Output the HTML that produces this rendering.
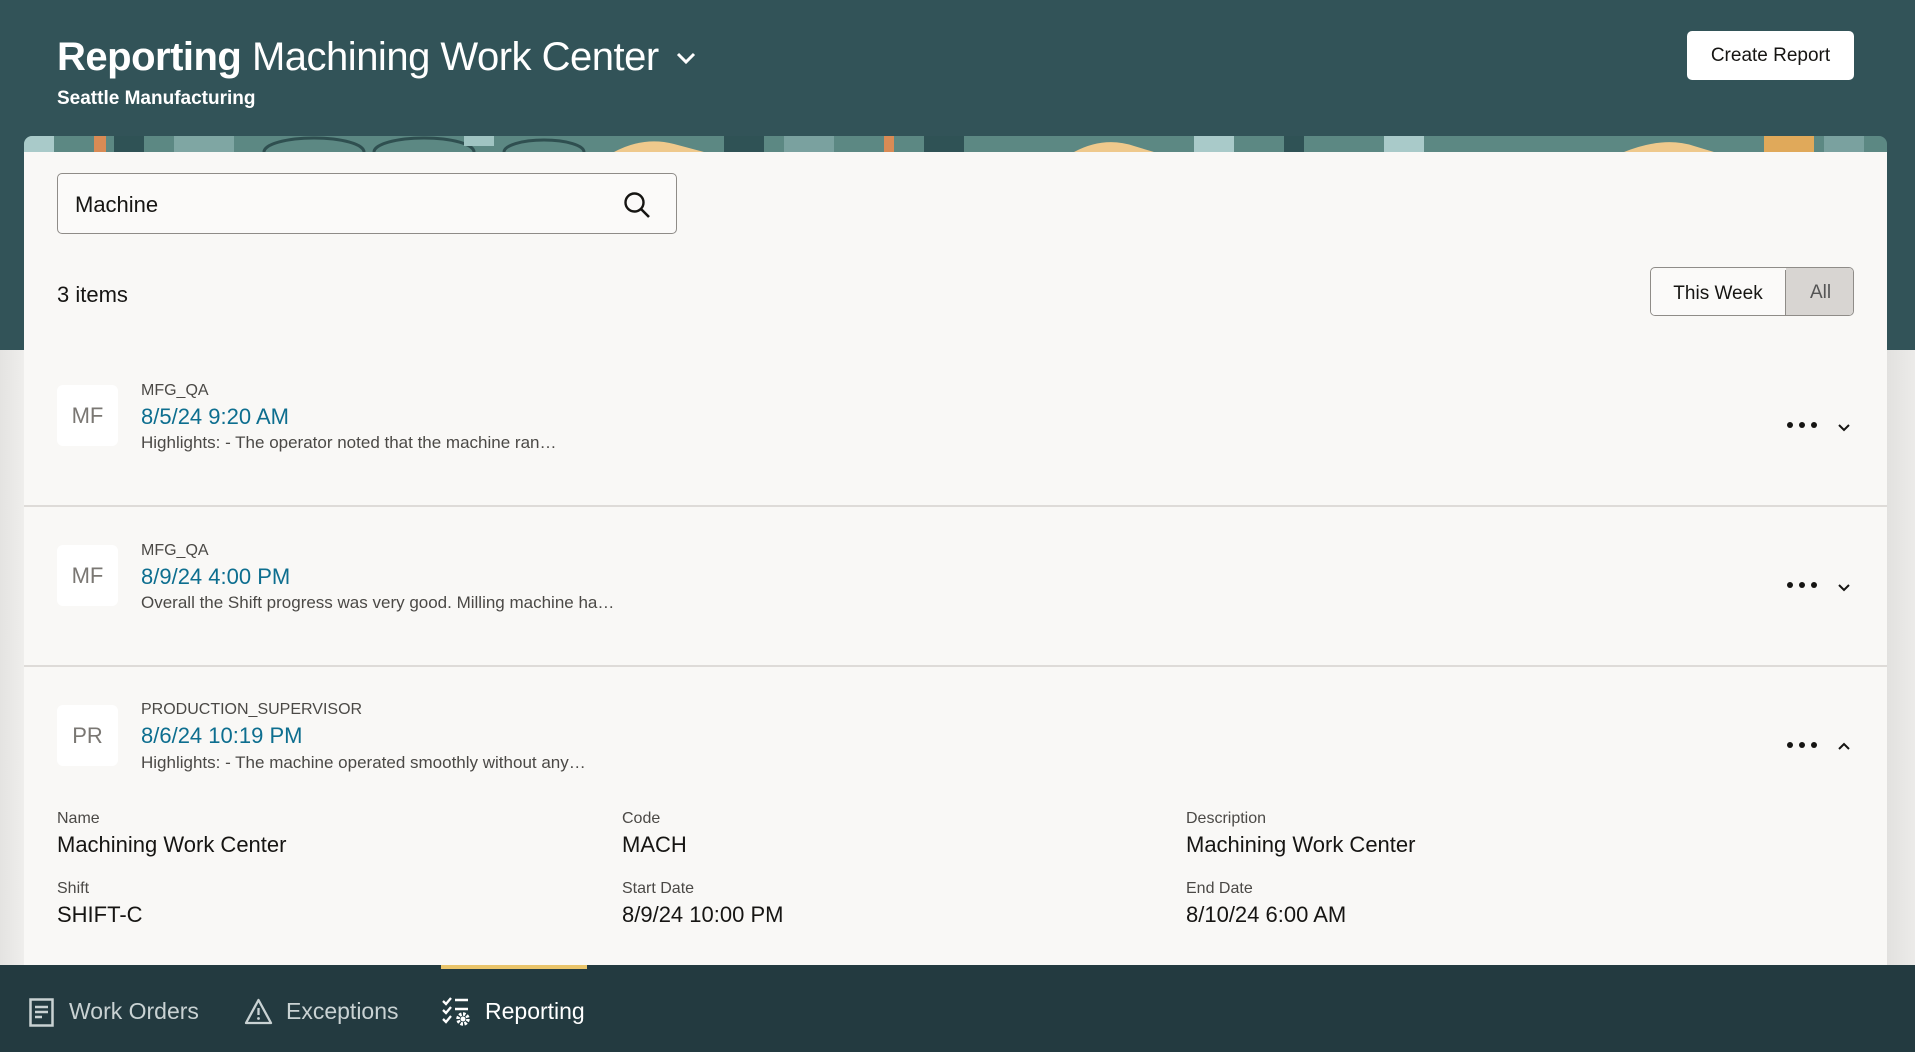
<!DOCTYPE html>
<html><head><meta charset="utf-8">
<style>
*{box-sizing:border-box;margin:0;padding:0}
body{width:1915px;height:1052px;overflow:hidden;font-family:"Liberation Sans",sans-serif;background:#efeeec;position:relative;color:#161513}
.hdr{position:absolute;left:0;top:0;width:1915px;height:350px;background:#325358}
.side{position:absolute;top:350px;height:615px;width:24px;background:linear-gradient(90deg,#e4e3e1,#efeeec)}
h1{position:absolute;left:57px;top:35px;font-size:40px;font-weight:400;color:#fff;letter-spacing:-0.5px;white-space:nowrap}
h1 b{font-weight:700}
.sub{position:absolute;left:57px;top:88px;font-size:19px;font-weight:700;color:#fff}
.cr{position:absolute;left:1687px;top:31px;width:167px;height:49px;background:#fff;border-radius:5px;font-size:19px;text-align:center;line-height:49px;color:#161513}
.banner{position:absolute;left:24px;top:136px;width:1863px;height:16px;border-radius:8px 8px 0 0;overflow:hidden;background:#5c8883}
.card{position:absolute;left:24px;top:152px;width:1863px;height:813px;background:#f9f8f6}
.search{position:absolute;left:33px;top:21px;width:620px;height:61px;border:1px solid #8f8c88;border-radius:5px;background:#fbfaf9}
.search span{position:absolute;left:17px;top:18px;font-size:22px}
.items{position:absolute;left:33px;top:130px;font-size:22px}
.tog{position:absolute;left:1626px;top:115px;width:204px;height:49px;border:1px solid #8f8c88;border-radius:5px;overflow:hidden;font-size:19px}
.tog .a{position:absolute;left:0;top:2px;width:135px;height:45px;line-height:47px;text-align:center;background:#fbfaf9;border-right:1px solid #8f8c88}
.tog .b{position:absolute;left:135px;top:0;width:69px;height:47px;line-height:50px;text-align:center;background:#d8d5d2;color:#555}
.sep{position:absolute;left:0;width:1863px;height:2px;background:#dedbd8}
.av{position:absolute;left:33px;width:61px;height:61px;background:#fff;border-radius:6px;color:#7a7773;font-size:22px;text-align:center;line-height:61px}
.lab{position:absolute;left:117px;font-size:16px;color:#4b4946}
.dt{position:absolute;left:117px;font-size:22px;color:#0d6e8f}
.tx{position:absolute;left:117px;font-size:17px;color:#4b4946}
.dots{position:absolute;left:1763px;width:30px;height:6px}
.dots i{position:absolute;top:0;width:6px;height:6px;border-radius:3px;background:#161513}
.chev{position:absolute;left:1813px;width:14px;height:14px}
.fl{position:absolute;font-size:16px;color:#4b4946}
.fv{position:absolute;font-size:22px}
.nav{position:absolute;left:0;top:965px;width:1915px;height:87px;background:#233a40}
.nav .u{position:absolute;left:441px;top:0;width:146px;height:4px;background:#e9c46a}
.ni{position:absolute;top:33px;font-size:23px;color:#c9d2d3}
</style></head><body>
<div class="hdr"></div>
<div class="side" style="left:0"></div>
<div class="side" style="left:1887px;width:28px;background:linear-gradient(90deg,#e2e1df,#ecebe9)"></div>
<h1><b>Reporting</b> Machining Work Center <svg width="22" height="16" viewBox="0 0 22 16" style="margin-left:6px;vertical-align:4px"><path d="M3 4l8 8 8-8" fill="none" stroke="#fff" stroke-width="3"/></svg></h1>
<div class="sub">Seattle Manufacturing</div>
<div class="cr">Create Report</div>
<div class="banner">
<svg width="1863" height="16">
<rect x="0" y="0" width="30" height="16" fill="#a9cac9"/>
<rect x="70" y="0" width="12" height="16" fill="#d98b55"/>
<rect x="90" y="0" width="30" height="16" fill="#2f5255"/>
<rect x="150" y="0" width="60" height="16" fill="#7fa6a3"/>
<ellipse cx="290" cy="16" rx="50" ry="14" fill="none" stroke="#2f4f50" stroke-width="3"/>
<ellipse cx="400" cy="16" rx="50" ry="14" fill="none" stroke="#2f4f50" stroke-width="3"/>
<ellipse cx="520" cy="16" rx="40" ry="12" fill="none" stroke="#2f4f50" stroke-width="3"/>
<rect x="440" y="0" width="30" height="10" fill="#a0c4c2"/>
<path d="M590 16 Q620 0 650 8 L680 16Z" fill="#efc98c"/>
<rect x="700" y="0" width="40" height="16" fill="#2f5255"/>
<rect x="760" y="0" width="50" height="16" fill="#7aa19f"/>
<rect x="860" y="0" width="10" height="16" fill="#d98b55"/>
<rect x="900" y="0" width="40" height="16" fill="#2f5255"/>
<path d="M1050 16 Q1080 0 1110 10 L1130 16Z" fill="#efc98c"/>
<rect x="1170" y="0" width="40" height="16" fill="#a9cac9"/>
<rect x="1260" y="0" width="20" height="16" fill="#2f5255"/>
<rect x="1360" y="0" width="40" height="16" fill="#a9cac9"/>
<path d="M1600 16 Q1640 0 1670 10 L1690 16Z" fill="#efc98c"/>
<rect x="1740" y="0" width="50" height="16" fill="#e0a95a"/>
<rect x="1800" y="0" width="40" height="16" fill="#7aa19f"/>
</svg></div>
<div class="card">
<div class="search"><span>Machine</span>
<svg style="position:absolute;left:565px;top:17px" width="28" height="28" viewBox="0 0 28 28"><circle cx="11.5" cy="11.5" r="9" fill="none" stroke="#161513" stroke-width="2.4"/><path d="M18 18l8 8" stroke="#161513" stroke-width="2.6"/></svg></div>
<div class="items">3 items</div>
<div class="tog"><div class="a">This Week</div><div class="b">All</div></div>

<div class="av" style="top:233px">MF</div>
<div class="lab" style="top:230px">MFG_QA</div>
<div class="dt" style="top:252px">8/5/24 9:20 AM</div>
<div class="tx" style="top:281px">Highlights: - The operator noted that the machine ran…</div>
<div class="dots" style="top:270px"><i style="left:0"></i><i style="left:12px"></i><i style="left:24px"></i></div>
<svg class="chev" style="top:268px" viewBox="0 0 14 14"><path d="M2 5l5 5 5-5" fill="none" stroke="#161513" stroke-width="2"/></svg>
<div class="sep" style="top:353px"></div>

<div class="av" style="top:393px">MF</div>
<div class="lab" style="top:390px">MFG_QA</div>
<div class="dt" style="top:412px">8/9/24 4:00 PM</div>
<div class="tx" style="top:441px">Overall the Shift progress was very good. Milling machine ha…</div>
<div class="dots" style="top:430px"><i style="left:0"></i><i style="left:12px"></i><i style="left:24px"></i></div>
<svg class="chev" style="top:428px" viewBox="0 0 14 14"><path d="M2 5l5 5 5-5" fill="none" stroke="#161513" stroke-width="2"/></svg>
<div class="sep" style="top:513px"></div>

<div class="av" style="top:553px">PR</div>
<div class="lab" style="top:549px">PRODUCTION_SUPERVISOR</div>
<div class="dt" style="top:571px">8/6/24 10:19 PM</div>
<div class="tx" style="top:601px">Highlights: - The machine operated smoothly without any…</div>
<div class="dots" style="top:590px"><i style="left:0"></i><i style="left:12px"></i><i style="left:24px"></i></div>
<svg class="chev" style="top:588px" viewBox="0 0 14 14"><path d="M2 9l5-5 5 5" fill="none" stroke="#161513" stroke-width="2"/></svg>

<div class="fl" style="left:33px;top:658px">Name</div>
<div class="fv" style="left:33px;top:680px">Machining Work Center</div>
<div class="fl" style="left:598px;top:658px">Code</div>
<div class="fv" style="left:598px;top:680px">MACH</div>
<div class="fl" style="left:1162px;top:658px">Description</div>
<div class="fv" style="left:1162px;top:680px">Machining Work Center</div>
<div class="fl" style="left:33px;top:728px">Shift</div>
<div class="fv" style="left:33px;top:750px">SHIFT-C</div>
<div class="fl" style="left:598px;top:728px">Start Date</div>
<div class="fv" style="left:598px;top:750px">8/9/24 10:00 PM</div>
<div class="fl" style="left:1162px;top:728px">End Date</div>
<div class="fv" style="left:1162px;top:750px">8/10/24 6:00 AM</div>
</div>

<div class="nav"><div class="u"></div>
<svg style="position:absolute;left:29px;top:33px" width="25" height="29" viewBox="0 0 25 29"><rect x="1.5" y="1.5" width="22" height="26" fill="none" stroke="#c9d2d3" stroke-width="2.5"/><path d="M6 9h13M6 14h13M6 19h7" stroke="#c9d2d3" stroke-width="2.5"/></svg>
<div class="ni" style="left:69px">Work Orders</div>
<svg style="position:absolute;left:244px;top:33px" width="29" height="27" viewBox="0 0 29 27"><path d="M14.5 2L27 25H2Z" fill="none" stroke="#c9d2d3" stroke-width="2.3" stroke-linejoin="round"/><path d="M14.5 10v7" stroke="#c9d2d3" stroke-width="2.3"/><circle cx="14.5" cy="20.5" r="1.4" fill="#c9d2d3"/></svg>
<div class="ni" style="left:286px">Exceptions</div>
<svg style="position:absolute;left:441px;top:31px" width="31" height="31" viewBox="0 0 31 31"><path d="M2 5l3 3 5-6M2 14l3 3 5-6M2 23l3 3 5-6" fill="none" stroke="#fff" stroke-width="2.3"/><path d="M14 4h13M14 13h13" stroke="#fff" stroke-width="2.5"/><circle cx="22" cy="23" r="5" fill="none" stroke="#fff" stroke-width="3.5" stroke-dasharray="2.5 1.4"/><circle cx="22" cy="23" r="2.5" fill="#fff"/></svg>
<div class="ni" style="left:485px;color:#fff">Reporting</div>
</div>
</body></html>
